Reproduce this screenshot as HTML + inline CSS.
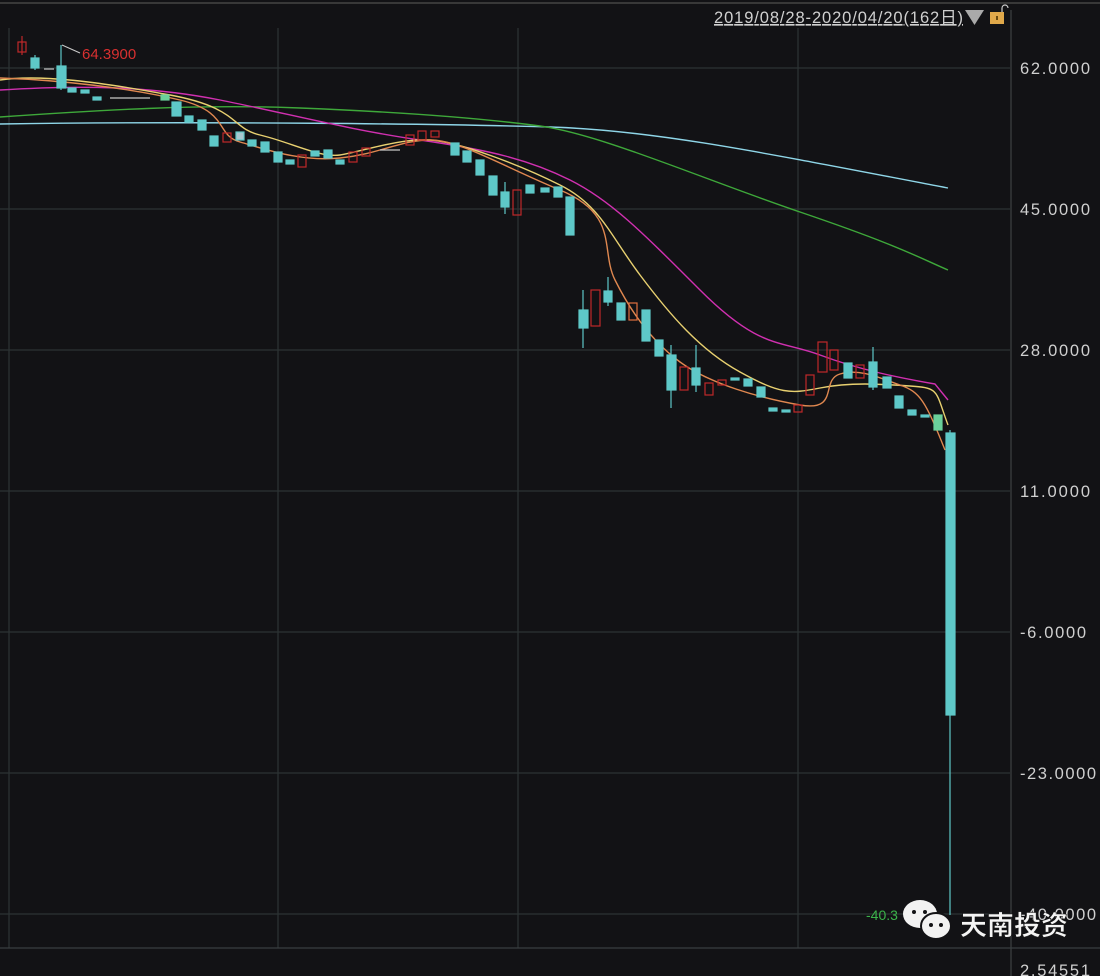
<!DOCTYPE html>
<html><head><meta charset="utf-8"><style>
body{margin:0;background:#121215;width:1100px;height:976px;overflow:hidden;font-family:"Liberation Sans","Noto Sans CJK SC",sans-serif}
</style></head><body>
<svg width="1100" height="976" xmlns="http://www.w3.org/2000/svg" style="position:absolute;left:0;top:0">
<rect width="1100" height="976" fill="#121215"/>
<line x1="0" y1="3" x2="1100" y2="3" stroke="#444" stroke-width="1.5"/>
<g stroke="#2c3234" stroke-width="1.3">
<line x1="0" y1="68" x2="1010" y2="68"/><line x1="0" y1="209" x2="1010" y2="209"/>
<line x1="0" y1="350" x2="1010" y2="350"/><line x1="0" y1="491" x2="1010" y2="491"/>
<line x1="0" y1="632" x2="1010" y2="632"/><line x1="0" y1="773" x2="1010" y2="773"/>
<line x1="0" y1="914" x2="1010" y2="914"/>
<line x1="9" y1="28" x2="9" y2="948"/><line x1="278" y1="28" x2="278" y2="948"/>
<line x1="518" y1="28" x2="518" y2="948"/><line x1="798" y1="28" x2="798" y2="948"/>
</g>
<line x1="1011" y1="10" x2="1011" y2="976" stroke="#3a3e40" stroke-width="1.3"/>
<line x1="0" y1="948" x2="1100" y2="948" stroke="#3a3e40" stroke-width="1.3"/>
<g fill="#d0d0d0" font-size="16.5">
<text x="1020" y="74" textLength="70">62.0000</text><text x="1020" y="215" textLength="70">45.0000</text>
<text x="1020" y="356" textLength="70">28.0000</text><text x="1020" y="497" textLength="70">11.0000</text>
<text x="1020" y="638" textLength="66">-6.0000</text><text x="1020" y="779" textLength="76">-23.0000</text>
<text x="1020" y="920" textLength="76">-40.0000</text><text x="1020" y="976" textLength="70">2.54551</text>
</g>
<text x="714" y="23" fill="#d0d0d0" font-size="16.5" text-decoration="underline" textLength="249">2019/08/28-2020/04/20(162日)</text>
<polygon points="965,10 984,10 974.5,25" fill="#aaa"/>
<rect x="990" y="12" width="14" height="12" fill="#e0a84a"/>
<rect x="996" y="16" width="2" height="4" fill="#6a4a10"/>
<path d="M1002 12 v-4 a3 3 0 0 1 6 0" stroke="#ccc" fill="none" stroke-width="1.2"/>
<text x="82" y="59" fill="#d83030" font-size="15">64.3900</text>
<line x1="62" y1="45" x2="80" y2="53" stroke="#ccc" stroke-width="1"/>
<text x="866" y="920" fill="#3bb34a" font-size="14">-40.3</text>
<g fill="none" stroke-width="1.4">
<path stroke="#8fd6e8" d="M0,124 C200,121 450,124 550,127 S750,150 948,188"/>
<path stroke="#3ea83a" d="M0,117 C100,110 200,104 300,108 S480,118 540,126 S700,178 800,212 S920,258 948,270"/>
<path stroke="#d030b0" d="M0,90 C80,85 150,86 220,100 S350,130 420,140 S530,160 570,180 S640,230 700,290 S780,340 820,355 S900,378 935,384 L948,400"/>
<path stroke="#e8d070" d="M0,80 C40,74 100,82 170,95 S230,128 260,135 S320,158 340,155 S400,138 430,140 S520,165 560,185 S610,235 640,275 S700,350 740,372 S790,394 820,388 S880,384 910,386 S935,390 948,425"/>
<path stroke="#e08850" d="M0,78 C60,80 130,88 180,100 S215,135 240,142 S300,162 340,158 S400,140 430,140 S500,165 560,190 S600,250 615,280 S650,340 680,362 S760,398 800,405 S820,380 840,374 S880,378 900,385 S925,400 945,450"/>
</g>
<g stroke-width="1.2">
<g stroke="#5ec8c8" fill="#5ec8c8">
<line x1="35" y1="55" x2="35" y2="70"/><rect x="31" y="58" width="8" height="10"/>
<line x1="61" y1="45" x2="61" y2="90"/><rect x="57" y="66" width="9" height="22"/>
<rect x="68" y="88" width="8" height="4"/><rect x="81" y="90" width="8" height="3"/>
<rect x="93" y="97" width="8" height="3"/><rect x="161" y="95" width="8" height="5" fill="#6ad09a" stroke="#6ad09a"/>
<rect x="172" y="102" width="9" height="14"/><rect x="185" y="116" width="8" height="6"/>
<rect x="198" y="120" width="8" height="10"/><rect x="210" y="136" width="8" height="10"/>
<rect x="236" y="132" width="8" height="8" fill="#a8c8d0"/><rect x="248" y="140" width="8" height="6"/>
<rect x="261" y="142" width="8" height="10"/><rect x="274" y="152" width="8" height="10"/>
<rect x="286" y="160" width="8" height="4"/><rect x="311" y="151" width="8" height="5"/>
<rect x="324" y="150" width="8" height="8"/><rect x="336" y="160" width="8" height="4"/>
<rect x="451" y="143" width="8" height="12"/><rect x="463" y="151" width="8" height="11"/>
<rect x="476" y="160" width="8" height="15"/><rect x="489" y="176" width="8" height="19"/>
<line x1="505" y1="182" x2="505" y2="214"/><rect x="501" y="192" width="8" height="15"/>
<rect x="526" y="185" width="8" height="8"/><rect x="541" y="188" width="8" height="4"/>
<rect x="554" y="187" width="8" height="10"/><rect x="566" y="197" width="8" height="38"/>
<line x1="583" y1="290" x2="583" y2="348"/><rect x="579" y="310" width="9" height="18"/>
<line x1="608" y1="277" x2="608" y2="306"/><rect x="604" y="291" width="8" height="11"/>
<rect x="617" y="303" width="8" height="17"/><rect x="642" y="310" width="8" height="31"/>
<rect x="655" y="340" width="8" height="16"/>
<line x1="671" y1="345" x2="671" y2="408"/><rect x="667" y="355" width="9" height="35"/>
<line x1="696" y1="345" x2="696" y2="392"/><rect x="692" y="368" width="8" height="17"/>
<rect x="731" y="378" width="8" height="2"/><rect x="744" y="379" width="8" height="7"/>
<rect x="757" y="387" width="8" height="10"/><rect x="769" y="408" width="8" height="3"/>
<rect x="782" y="410" width="8" height="2"/>
<rect x="844" y="363" width="8" height="15"/>
<line x1="873" y1="347" x2="873" y2="390"/><rect x="869" y="362" width="8" height="25"/>
<rect x="883" y="377" width="8" height="11"/><rect x="895" y="396" width="8" height="12"/>
<rect x="908" y="410" width="8" height="5"/><rect x="921" y="415" width="8" height="2"/>
<rect x="934" y="415" width="8" height="15" fill="#6ad09a" stroke="#6ad09a"/>
<line x1="950" y1="430" x2="950" y2="915"/><rect x="946" y="433" width="9" height="282"/>
</g>
<g stroke="#c0282a" fill="none">
<line x1="22" y1="36" x2="22" y2="55"/><rect x="18" y="42" width="8" height="10"/>
<rect x="223" y="133" width="8" height="9"/><rect x="298" y="155" width="8" height="12"/>
<rect x="349" y="152" width="8" height="10"/><rect x="362" y="148" width="8" height="8"/>
<rect x="406" y="135" width="8" height="10"/><rect x="418" y="131" width="8" height="9"/>
<rect x="431" y="131" width="8" height="6"/>
<rect x="513" y="190" width="8" height="25"/>
<rect x="591" y="290" width="9" height="36"/><rect x="629" y="303" width="8" height="17" stroke="#e07040"/>
<rect x="680" y="367" width="8" height="23"/><rect x="705" y="383" width="8" height="12"/>
<rect x="718" y="380" width="8" height="5"/><rect x="794" y="405" width="8" height="7"/>
<rect x="806" y="375" width="8" height="20"/><rect x="818" y="342" width="9" height="30"/>
<rect x="830" y="350" width="8" height="20"/><rect x="856" y="365" width="8" height="13"/>
</g>
<g stroke="#c8c8c8"><line x1="44" y1="69" x2="54" y2="69"/><line x1="110" y1="98" x2="150" y2="98"/><line x1="380" y1="150" x2="400" y2="150"/></g>
</g>
<ellipse cx="920" cy="914" rx="17" ry="14" fill="#f2f2f2"/>
<ellipse cx="936" cy="926" rx="15" ry="13" fill="#f2f2f2" stroke="#121215" stroke-width="2"/>
<circle cx="914" cy="912" r="2" fill="#121215"/><circle cx="925" cy="912" r="2" fill="#121215"/>
<circle cx="931" cy="925" r="2" fill="#121215"/><circle cx="941" cy="925" r="2" fill="#121215"/>
<text x="960" y="935" fill="#f4f4f4" font-size="27" font-weight="bold" stroke="#111" stroke-width="0.5">天南投资</text>
</svg>
</body></html>
